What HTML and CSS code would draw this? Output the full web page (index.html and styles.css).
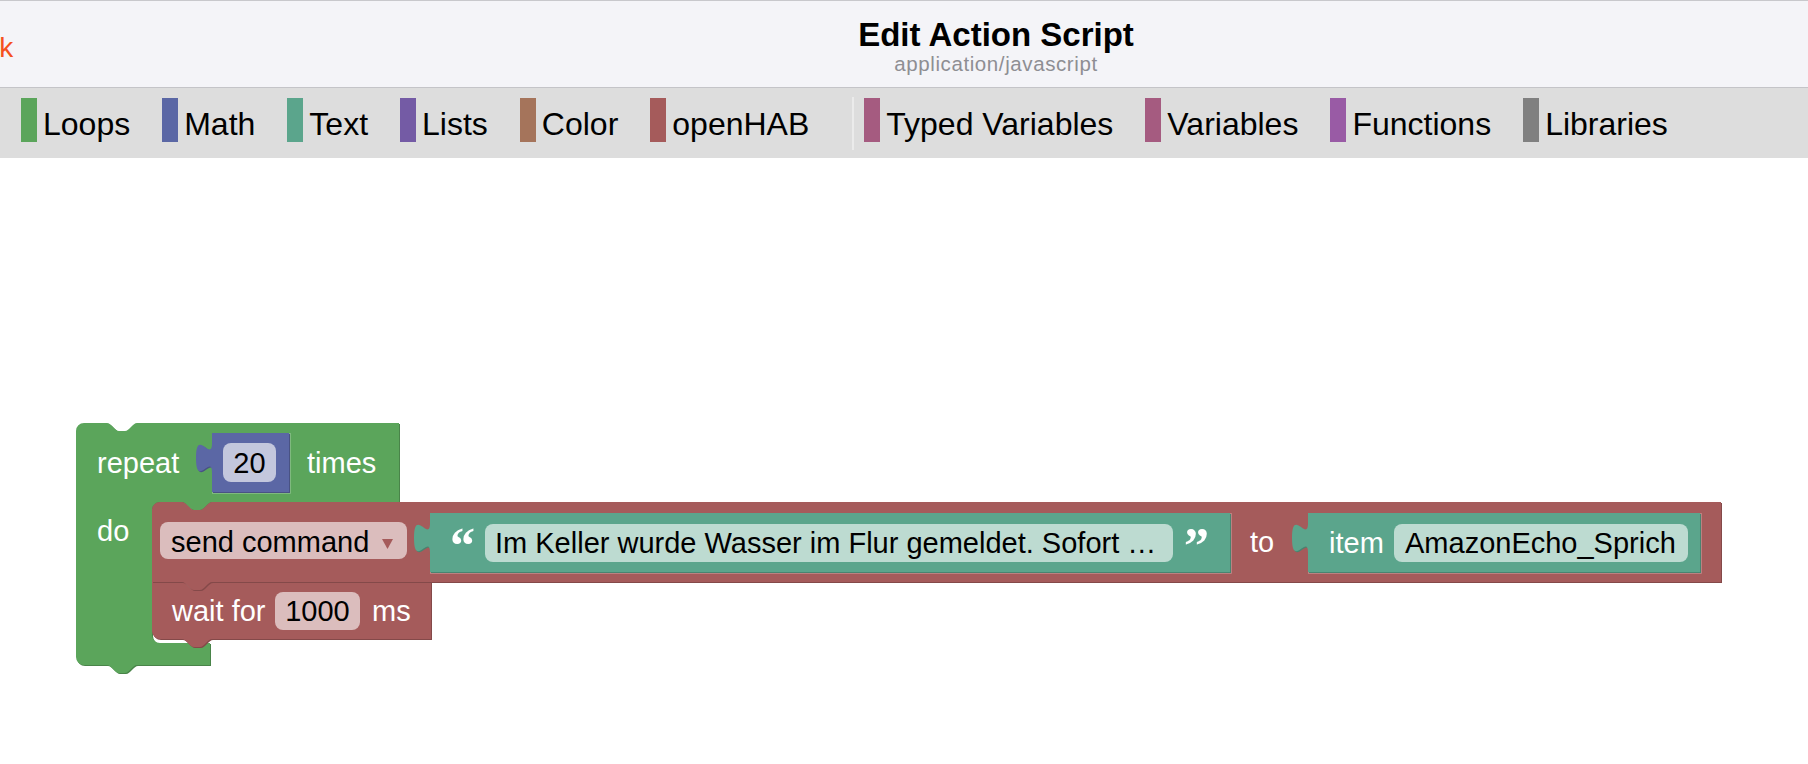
FILE: index.html
```html
<!DOCTYPE html>
<html lang="en">
<head>
    <meta charset="UTF-8">
    <meta name="viewport" content="width=device-width, initial-scale=1.0">
    <title>Edit Action Script</title>
    <link rel="stylesheet" href="styles.css">
</head>
<body>

    <div class="topbar">
        <div class="back-slot"><a class="back" href="#">Back</a></div>
        <div class="title-wrap">
            <div class="title">Edit Action Script</div>
            <div class="subtitle">application/javascript</div>
        </div>
    </div>

    <div class="toolbox">
        <div class="cat"><span class="cat-bar" style="background:#5ba55b"></span><span class="cat-label">Loops</span></div>
        <div class="cat"><span class="cat-bar" style="background:#5b67a5"></span><span class="cat-label">Math</span></div>
        <div class="cat"><span class="cat-bar" style="background:#5ba58c"></span><span class="cat-label">Text</span></div>
        <div class="cat"><span class="cat-bar" style="background:#745ba5"></span><span class="cat-label">Lists</span></div>
        <div class="cat"><span class="cat-bar" style="background:#a5745b"></span><span class="cat-label">Color</span></div>
        <div class="cat"><span class="cat-bar" style="background:#a55b5b"></span><span class="cat-label">openHAB</span></div>
        <div class="toolbox-sep"></div>
        <div class="cat"><span class="cat-bar" style="background:#a55b80"></span><span class="cat-label">Typed Variables</span></div>
        <div class="cat"><span class="cat-bar" style="background:#a55b80"></span><span class="cat-label">Variables</span></div>
        <div class="cat"><span class="cat-bar" style="background:#995ba5"></span><span class="cat-label">Functions</span></div>
        <div class="cat"><span class="cat-bar" style="background:#808080"></span><span class="cat-label">Libraries</span></div>
    </div>

    <div class="workspace">
        <svg class="blocks" width="1808" height="606" viewBox="0 158 1808 606">
            <!-- repeat block -->
            <g class="blk-loop">
                <path class="dark" transform="translate(1,1)" d="M76,431 a8,8 0 0 1 8,-8 H107 c4,0 8,8 12,8 h6 c4,0 8,-8 12,-8 H399 V502 H212 c-4,0 -8,8 -12,8 h-6 c-4,0 -8,-8 -12,-8 H160 a8,8 0 0 0 -8,8 V635 a8,8 0 0 0 8,8 H210 V665 H137 c-4,0 -8,8 -12,8 h-6 c-4,0 -8,-8 -12,-8 H84 a8,8 0 0 1 -8,-8 Z"/>
                <path class="fill" d="M76,431 a8,8 0 0 1 8,-8 H107 c4,0 8,8 12,8 h6 c4,0 8,-8 12,-8 H399 V502 H212 c-4,0 -8,8 -12,8 h-6 c-4,0 -8,-8 -12,-8 H160 a8,8 0 0 0 -8,8 V635 a8,8 0 0 0 8,8 H210 V665 H137 c-4,0 -8,8 -12,8 h-6 c-4,0 -8,-8 -12,-8 H84 a8,8 0 0 1 -8,-8 Z"/>
                <polyline class="socket" points="212,493 290,493 290,433"/>
                <text class="lbl" x="97" y="473">repeat</text>
                <text class="lbl" x="307" y="473">times</text>
                <text class="lbl" x="97" y="541">do</text>
            </g>

            <!-- number block -->
            <g class="blk-math">
                <path class="dark" transform="translate(1,1)" d="M212,433 H289 V492 H212 V473 c0,-20 -16,16 -16,-15 s16,5 16,-15 Z"/>
                <path class="fill" d="M212,433 H289 V492 H212 V473 c0,-20 -16,16 -16,-15 s16,5 16,-15 Z"/>
                <rect class="field" x="223" y="443" width="53" height="39" rx="8"/>
                <text class="val" x="249.5" y="473" text-anchor="middle">20</text>
            </g>

            <!-- wait block -->
            <g class="blk-hab">
                <path class="dark" transform="translate(1,1)" d="M152,582 H182 c4,0 8,8 12,8 h6 c4,0 8,-8 12,-8 H431 V639 H212 c-4,0 -8,8 -12,8 h-6 c-4,0 -8,-8 -12,-8 H160 a8,8 0 0 1 -8,-8 Z"/>
                <path class="fill" d="M152,582 H182 c4,0 8,8 12,8 h6 c4,0 8,-8 12,-8 H431 V639 H212 c-4,0 -8,8 -12,8 h-6 c-4,0 -8,-8 -12,-8 H160 a8,8 0 0 1 -8,-8 Z"/>
                <text class="lbl" x="172" y="621">wait for</text>
                <rect class="field" x="275" y="592" width="85" height="38" rx="8"/>
                <text class="val" x="317.5" y="621" text-anchor="middle">1000</text>
                <text class="lbl" x="372" y="621">ms</text>
            </g>

            <!-- send command block -->
            <g class="blk-hab">
                <path class="dark" transform="translate(1,1)" d="M152,510 a8,8 0 0 1 8,-8 H182 c4,0 8,8 12,8 h6 c4,0 8,-8 12,-8 H1721 V582 H212 c-4,0 -8,8 -12,8 h-6 c-4,0 -8,-8 -12,-8 H152 Z"/>
                <path class="fill" d="M152,510 a8,8 0 0 1 8,-8 H182 c4,0 8,8 12,8 h6 c4,0 8,-8 12,-8 H1721 V582 H212 c-4,0 -8,8 -12,8 h-6 c-4,0 -8,-8 -12,-8 H152 Z"/>
                <rect class="field" x="160" y="522" width="247" height="37" rx="8"/>
                <text class="val" x="171" y="552">send command</text>
                <polygon class="arrow" points="382,539 393,539 387.5,549"/>
                <polyline class="socket" points="430,573 1231,573 1231,513"/>
                <text class="lbl" x="1250" y="552">to</text>
                <polyline class="socket" points="1308,573 1701,573 1701,513"/>
            </g>

            <!-- text block -->
            <g class="blk-text">
                <path class="dark" transform="translate(1,1)" d="M430,513 H1230 V572 H430 V553 c0,-20 -16,16 -16,-15 s16,5 16,-15 Z"/>
                <path class="fill" d="M430,513 H1230 V572 H430 V553 c0,-20 -16,16 -16,-15 s16,5 16,-15 Z"/>
                <text class="quote" x="450" y="562">&#8220;</text>
                <rect class="field" x="485" y="524" width="688" height="38" rx="8"/>
                <text class="val" x="495" y="553">Im Keller wurde Wasser im Flur gemeldet. Sofort &#8230;</text>
                <text class="quote" x="1184" y="562">&#8221;</text>
            </g>

            <!-- item block -->
            <g class="blk-text">
                <path class="dark" transform="translate(1,1)" d="M1308,513 H1700 V572 H1308 V553 c0,-20 -16,16 -16,-15 s16,5 16,-15 Z"/>
                <path class="fill" d="M1308,513 H1700 V572 H1308 V553 c0,-20 -16,16 -16,-15 s16,5 16,-15 Z"/>
                <text class="lbl" x="1329" y="553">item</text>
                <rect class="field" x="1394" y="524" width="294" height="38" rx="8"/>
                <text class="val" x="1405" y="553">AmazonEcho_Sprich</text>
            </g>
        </svg>
    </div>

</body>
</html>
```

FILE: styles.css
```css
html, body {
    margin: 0;
    padding: 0;
}
body {
    font-family: "Liberation Sans", Arial, sans-serif;
    background-color: #ffffff;
    width: 1808px;
    height: 764px;
    overflow: hidden;
}
.topbar {
    display: flex;
    align-items: flex-start;
    height: 86px;
    background-color: #f4f4f8;
    border-top: 1px solid #c8c8cc;
    border-bottom: 1px solid #c4c4c8;
}
.back-slot {
    width: 0;
    overflow: visible;
    padding-top: 32px;
}
.back {
    display: block;
    margin-left: -49px;
    font-size: 28px;
    line-height: 30px;
    color: #f4511e;
    text-decoration: none;
}
.title-wrap {
    flex: 1;
    margin-left: 184px;
    padding-top: 17px;
    text-align: center;
}
.title {
    font-size: 33px;
    font-weight: bold;
    line-height: 34px;
    color: #000000;
}
.subtitle {
    font-size: 20.5px;
    line-height: 22px;
    letter-spacing: 0.6px;
    color: #8e8e93;
    margin-top: 1px;
}
.toolbox {
    display: flex;
    align-items: flex-start;
    height: 60px;
    padding: 10px 0 0 21px;
    background-color: #dddddd;
}
.cat {
    display: flex;
    align-items: flex-start;
    margin-right: 32px;
}
.cat-bar {
    width: 16px;
    height: 44px;
    margin-right: 6px;
}
.cat-label {
    font-size: 32px;
    line-height: 44px;
    padding-top: 4px;
    color: #000000;
    white-space: nowrap;
}
.toolbox-sep {
    width: 2px;
    height: 53px;
    margin: -1px 10px 0 11px;
    background-color: #ebebeb;
}
.workspace {
    height: 606px;
    background-color: #ffffff;
}
.blocks {
    display: block;
}
.blocks text {
    font-family: "Liberation Sans", Arial, sans-serif;
    font-size: 29px;
}
.blocks .lbl {
    fill: #ffffff;
}
.blocks .val {
    fill: #000000;
}
.blocks .quote {
    font-family: "Liberation Serif", "Times New Roman", serif;
    font-weight: bold;
    font-size: 50px;
    fill: #ffffff;
}
.blocks .socket {
    fill: none;
    stroke-width: 1.5;
}
.blk-loop .fill { fill: #5ba55b; }
.blk-loop .dark { fill: #498449; }
.blk-loop .socket { stroke: #8cc08c; }
.blk-math .fill { fill: #5b67a5; }
.blk-math .dark { fill: #495284; }
.blk-math .field { fill: #c3c7dd; }
.blk-hab .fill { fill: #a55b5b; }
.blk-hab .dark { fill: #844949; }
.blk-hab .field { fill: #dbbdbd; }
.blk-hab .socket { stroke: #c48f8f; }
.blk-hab .arrow { fill: #a55b5b; }
.blk-text .fill { fill: #5ba58c; }
.blk-text .dark { fill: #498470; }
.blk-text .field { fill: #bddbd1; }
```
